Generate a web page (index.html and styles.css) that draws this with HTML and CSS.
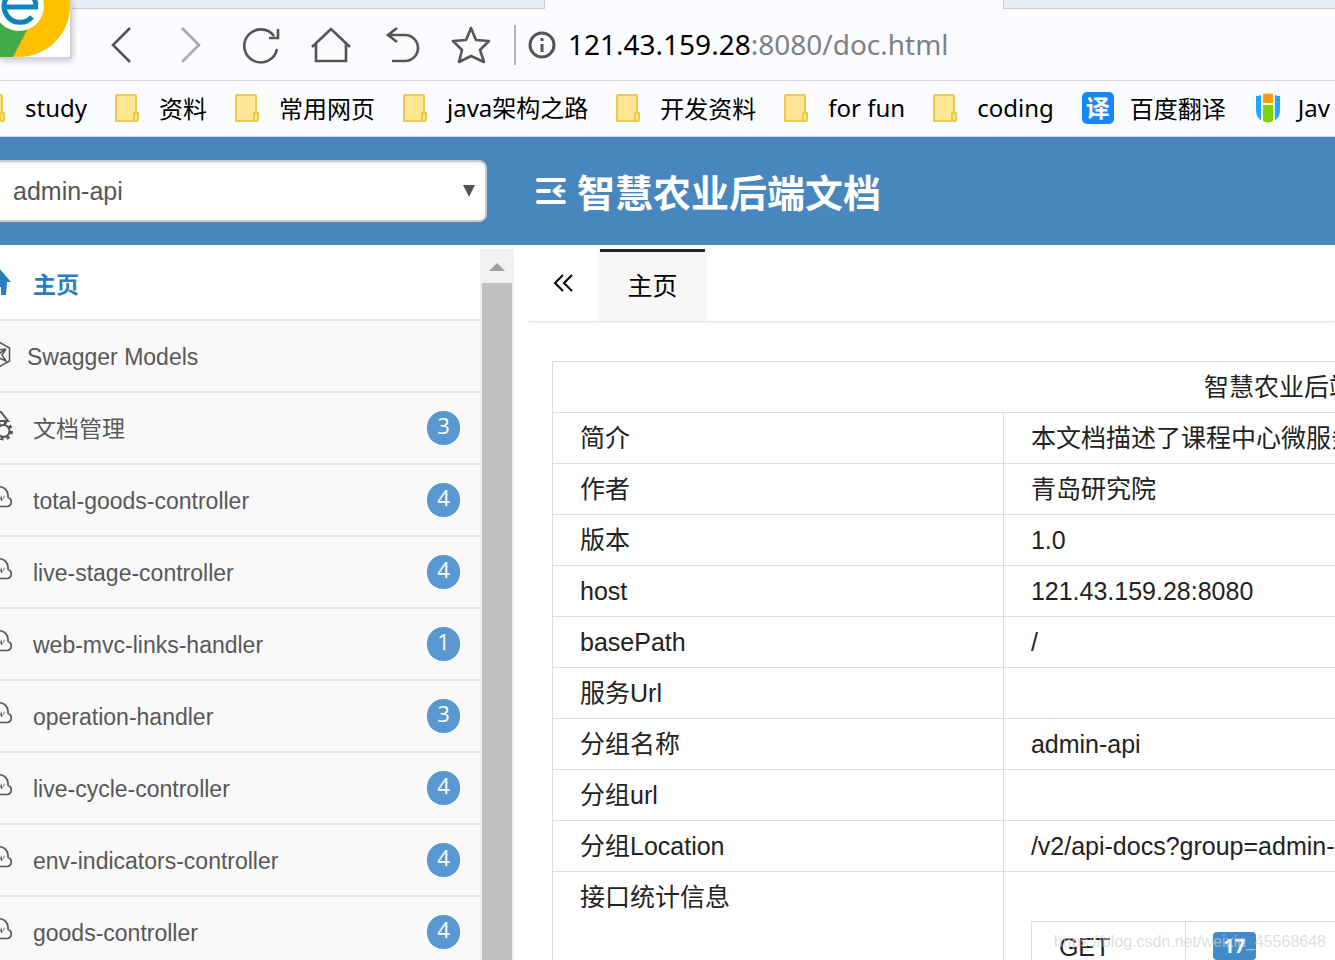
FILE: index.html
```html
<!DOCTYPE html>
<html lang="zh-CN">
<head>
<meta charset="utf-8">
<title>智慧农业后端文档</title>
<link rel="stylesheet" href="styles.css">
</head>
<body>
<svg class="defs" aria-hidden="true">
  <symbol id="folder" viewBox="0 0 24 28"><path d="M1 1h19q1 0 1 1v17h2v7q0 1-1 1H1z" fill="#ffe694"/><path d="M1 1h19q1 0 1 1v17M1 1v26h20M19 19h4v7l-1 1h-3z" fill="none" stroke="#ecc94b" stroke-width="2"/></symbol>
  <symbol id="cloud" viewBox="0 0 28 24"><path d="M7 21.500a6 6 0 0 1-1-11.500 8.500 8.500 0 0 1 17 .5v2a4.600 4.600 0 0 1-1 9z" fill="none" stroke="#555" stroke-width="1.600"/><path d="m10 11-3 3 3 3M14.500 16l2-5M16.500 11v5l3-5" fill="none" stroke="#777" stroke-width="1"/></symbol>
</svg>

<header class="browser">
  <div class="tabstrip"><div class="tab-left"></div><div class="tab-gap"></div><div class="tab-right"></div></div>
  <div class="logo"><svg width="70" height="57" viewBox="0 0 70 57"><circle cx="19" cy="6" r="51" fill="#ffc000"/><path d="M27 30 13 57H0V20z" fill="#43ab47"/><circle cx="19" cy="6" r="25" fill="#fff"/><path d="M4 7h34" stroke="#0e84bd" stroke-width="5"/><path d="M36 5a16 16 0 1 0-4 12" fill="none" stroke="#0e84bd" stroke-width="5"/></svg></div>
  <div class="toolbar">
    <button class="nav" aria-label="后退"><svg width="40" height="40" viewBox="0 0 40 40"><path d="M29 3 12 20l17 17"/></svg></button>
    <button class="nav pale" aria-label="前进"><svg width="40" height="40" viewBox="0 0 40 40"><path d="m11 3 17 17-17 17"/></svg></button>
    <button class="nav" aria-label="刷新"><svg width="40" height="40" viewBox="0 0 40 40"><path d="M36 24a16.500 16.500 0 1 1-3-13M37 4v9h-9"/></svg></button>
    <button class="nav" aria-label="主页"><svg width="40" height="40" viewBox="0 0 40 40"><path d="M1 22 20 4l19 18M5 19v17h30V19"/></svg></button>
    <button class="nav" aria-label="恢复"><svg width="40" height="40" viewBox="0 0 40 40"><path d="m16 3-9 7 9 7M7 10h17a13 13 0 0 1 0 26H11"/></svg></button>
    <button class="nav" aria-label="收藏"><svg width="40" height="40" viewBox="0 0 40 40"><path d="m20 3 5 12 13 1-9 9 4 12-13-6-12 6 3-12-9-9 13-1z" stroke-linejoin="round"/></svg></button>
    <span class="divider"></span>
    <svg class="info" width="28" height="28" viewBox="0 0 28 28"><circle cx="14" cy="14" r="12" fill="none" stroke="#555" stroke-width="3"/><path d="M14 7v3M14 13v8" stroke="#555" stroke-width="3"/></svg>
    <p class="url">121.43.159.28<span>:8080/doc.html</span></p>
  </div>
  <nav class="bookmarks">
    <a href="#"><svg class="folder"><use href="#folder"/></svg><span class="latin">study</span></a>
    <a href="#"><svg class="folder"><use href="#folder"/></svg><span>资料</span></a>
    <a href="#"><svg class="folder"><use href="#folder"/></svg><span>常用网页</span></a>
    <a href="#"><svg class="folder"><use href="#folder"/></svg><span><span class="latin">java</span>架构之路</span></a>
    <a href="#"><svg class="folder"><use href="#folder"/></svg><span>开发资料</span></a>
    <a href="#"><svg class="folder"><use href="#folder"/></svg><span class="latin">for fun</span></a>
    <a href="#"><svg class="folder"><use href="#folder"/></svg><span class="latin">coding</span></a>
    <a class="site" href="#"><b class="yi">译</b><span>百度翻译</span></a>
    <a class="site" href="#"><svg width="28" height="32" viewBox="2 0 28 32"><path d="M4 4q3 0 5-1v25Q4 26 4 17zM28 4q-3 0-5-1v25q5-2 5-11z" fill="#24a8ff"/><path d="M11 2q5-1 10 0v9H11z" fill="#ff9d00"/><path d="M11 13h10v16q-5 3-10 0z" fill="#79d60b"/></svg><span class="latin">Jav</span></a>
  </nav>
</header>

<div class="appbar">
  <div class="group"><select aria-label="分组"><option>admin-api</option></select></div>
  <svg class="fold" width="32" height="30" viewBox="0 0 32 30"><path d="M3 4h26M3 15h11M3 26h26" fill="none" stroke="#fff" stroke-width="4" stroke-linecap="round"/><path d="M22 15h7" stroke="#fff" stroke-width="3" stroke-linecap="round"/><path d="m25 10-6 5 6 5" fill="none" stroke="#fff" stroke-width="3" stroke-linecap="round" stroke-linejoin="round"/></svg>
  <h1>智慧农业后端文档</h1>
</div>

<div class="workspace">
  <aside class="sidebar">
    <ul class="menu">
      <li class="active"><a href="#"><svg class="icon" viewBox="0 0 28 24"><path d="M13-2 0 12l4 1v13h6v-8h6v8h5l1-13h4z" fill="#2b7dbc"/></svg><span>主页</span></a></li>
      <li class="models"><a href="#"><svg class="icon" viewBox="0 0 28 28"><path d="m14 3 10.500 6v13L14 28 4 22V9zM6 20l15-10-7 1M21 10l-4 6 4 6-9-4" fill="none" stroke="#555" stroke-width="1.500"/></svg><span>Swagger Models</span></a></li>
      <li><a href="#"><svg class="icon gear" viewBox="0 0 28 32"><path d="M4 28V3h12l7 9H12" fill="none" stroke="#555" stroke-width="2"/><circle cx="18.500" cy="22" r="6" fill="#f9f9f9" stroke="#555" stroke-width="2"/><circle cx="18.500" cy="22" r="8" fill="none" stroke="#555" stroke-width="3" stroke-dasharray="3 3.283"/></svg><span>文档管理</span><em>3</em></a></li>
      <li><a href="#"><svg class="icon"><use href="#cloud"/></svg><span>total-goods-controller</span><em>4</em></a></li>
      <li><a href="#"><svg class="icon"><use href="#cloud"/></svg><span>live-stage-controller</span><em>4</em></a></li>
      <li><a href="#"><svg class="icon"><use href="#cloud"/></svg><span>web-mvc-links-handler</span><em>1</em></a></li>
      <li><a href="#"><svg class="icon"><use href="#cloud"/></svg><span>operation-handler</span><em>3</em></a></li>
      <li><a href="#"><svg class="icon"><use href="#cloud"/></svg><span>live-cycle-controller</span><em>4</em></a></li>
      <li><a href="#"><svg class="icon"><use href="#cloud"/></svg><span>env-indicators-controller</span><em>4</em></a></li>
      <li><a href="#"><svg class="icon"><use href="#cloud"/></svg><span>goods-controller</span><em>4</em></a></li>
    </ul>
    <div class="scrollbar"><svg width="34" height="34" viewBox="0 0 34 34"><path d="m9 22 8-8 8 8z" fill="#a0a0a0"/></svg><div class="thumb"></div></div>
  </aside>
  <main class="content">
    <div class="tabs">
      <button class="prev" aria-label="向左"><svg width="20" height="20" viewBox="0 0 20 20"><path d="m10 2-8 8 8 8M19 2l-8 8 8 8" fill="none" stroke="#000" stroke-width="2"/></svg></button>
      <button class="tab">主页</button>
    </div>
    <div class="panel">
      <table class="info-table">
        <colgroup><col class="key-col"><col></colgroup>
        <tr><th colspan="2">智慧农业后端文档</th></tr>
        <tr><td>简介</td><td>本文档描述了课程中心微服务</td></tr>
        <tr><td>作者</td><td>青岛研究院</td></tr>
        <tr><td>版本</td><td>1.0</td></tr>
        <tr><td>host</td><td>121.43.159.28:8080</td></tr>
        <tr><td>basePath</td><td>/</td></tr>
        <tr><td>服务Url</td><td></td></tr>
        <tr><td>分组名称</td><td>admin-api</td></tr>
        <tr><td>分组url</td><td></td></tr>
        <tr><td>分组Location</td><td>/v2/api-docs?group=admin-api</td></tr>
        <tr><td>接口统计信息</td><td class="stats"><table><tr><td class="method">GET</td><td><b class="count">17</b></td></tr></table></td></tr>
      </table>
    </div>
  </main>
</div>
<p class="watermark">https://blog.csdn.net/weixin_45568648</p>
</body>
</html>
```

FILE: styles.css
```css
* { box-sizing: border-box; }
body {
  margin: 0;
  height: 100vh;
  display: flex;
  flex-direction: column;
  overflow: hidden;
  position: relative;
  background: #fff;
  color: #222;
  font-family: "Liberation Sans", "Noto Sans CJK SC", sans-serif;
}
.defs { display: none; }
button { padding: 0; border: 0; background: none; font: inherit; }
a { color: inherit; text-decoration: none; }
svg { flex: none; }

.browser { flex: none; position: relative; background: #fbfcff; color: #000; }
.tabstrip { display: flex; height: 9px; }
.tab-left, .tab-right { background: #ebedf6; border-bottom: 1px solid #c8cad0; }
.tab-left { width: 545px; border-right: 1px solid #c8cad0; }
.tab-gap { width: 458px; }
.tab-right { flex: 1; border-left: 1px solid #c8cad0; }
.logo {
  position: absolute;
  left: 0;
  top: 0;
  border: solid #d4d4d6;
  border-width: 0 2px 2px 0;
  box-shadow: 1px 2px 6px #0003;
  background: #fff;
}
.logo svg { display: block; }
.toolbar {
  display: flex;
  align-items: center;
  height: 72px;
  padding-left: 101px;
  border-bottom: 1px solid #d8d9dc;
}
.nav { width: 40px; height: 40px; margin-right: 30px; }
.nav svg { display: block; fill: none; stroke: #555; stroke-width: 2.6; }
.nav.pale svg { stroke: #aaa; }
.divider { width: 2px; height: 40px; margin-left: -7px; background: #b4b4b4; }
.info { margin-left: 12px; }
.url {
  margin: 0 0 0 12px;
  padding-bottom: 2px;
  font-family: "Noto Sans", sans-serif;
  font-size: 28px;
  line-height: 40px;
  white-space: nowrap;
}
.url span { color: #808080; }
.bookmarks {
  display: flex;
  align-items: center;
  gap: 28px;
  height: 56px;
  margin-left: -19px;
  padding-bottom: 2px;
  border-bottom: 1px solid #d8d9dc;
  font: 24px/32px "Noto Sans CJK SC", sans-serif;
  white-space: nowrap;
}
.bookmarks a { display: flex; align-items: center; gap: 20px; }
.bookmarks a.site { gap: 16px; }
.bookmarks .latin { font-family: "Noto Sans", sans-serif; }
.folder { width: 24px; height: 28px; }
.yi {
  width: 32px;
  height: 32px;
  border-radius: 5px;
  background: #1788fb;
  color: #fff;
  font-size: 24px;
  line-height: 30px;
  text-align: center;
}

.appbar {
  flex: none;
  display: flex;
  align-items: center;
  height: 108px;
  background: #4887be;
  color: #fff;
}
.group { position: relative; width: 495px; margin-left: -8px; }
.group::after {
  content: "";
  position: absolute;
  right: 12px;
  top: 25px;
  border: solid transparent;
  border-width: 12px 6px 0;
  border-top-color: #555;
}
select {
  display: block;
  width: 100%;
  height: 62px;
  padding: 0 19px;
  appearance: none;
  border: 2px solid #ccc;
  border-radius: 8px;
  background: #fff;
  box-shadow: inset 0 2px 3px #0001;
  color: #555;
  font: 25px "Liberation Sans", sans-serif;
}
.fold { margin-left: 48px; }
h1 { margin: 0 0 0 10px; padding-top: 6px; font-size: 38px; line-height: 56px; white-space: nowrap; }

.workspace { flex: 1; display: flex; gap: 14px; min-height: 0; padding-top: 4px; }
.sidebar { flex: none; display: flex; width: 514px; overflow: hidden; }
.menu { flex: 1; margin: 0; padding: 0; list-style: none; }
.menu li { height: 72px; border-bottom: 2px solid #e5e5e5; background: #f9f9f9; }
.menu a {
  display: flex;
  align-items: center;
  height: 100%;
  padding-right: 20px;
  color: #585858;
  font-size: 23px;
  line-height: 34px;
  white-space: nowrap;
}
.menu span { padding-top: 2px; }
.icon { width: 28px; height: 24px; margin: 0 20px 6px -15px; overflow: visible; }
.icon.gear { height: 32px; }
.models .icon { height: 28px; margin-right: 14px; }
.menu .active { background: #fff; }
.menu .active a { color: #2b7dbc; font-weight: bold; }
.menu em {
  width: 33px;
  height: 34px;
  margin-left: auto;
  border-radius: 16px;
  background: #5897cf;
  color: #fff;
  font: 22px/28px "Open Sans", sans-serif;
  text-align: center;
}
.scrollbar { display: flex; flex-direction: column; width: 34px; background: #f1f1f1; }
.thumb { flex: 1; margin: 0 2px; background: #c1c1c1; }

.content { flex: 1; min-width: 0; overflow: hidden; }
.tabs {
  display: flex;
  height: 73px;
  border-bottom: 1px solid #e4e4e4;
  box-shadow: 0 1px 2px #0001;
}
.prev { display: flex; align-items: center; justify-content: center; width: 70px; height: 68px; }
.tab {
  width: 109px;
  height: 72px;
  padding-bottom: 3px;
  border: solid #f6f6f6;
  border-width: 0 2px;
  background: linear-gradient(#23262e 3px, #f6f6f6 3px);
  color: #000;
  font-size: 25px;
}
.panel { padding: 39px 24px; }
table { border-collapse: collapse; font-size: 25px; line-height: 30px; }
.info-table { width: 1504px; table-layout: fixed; }
.key-col { width: 30%; }
th, td {
  height: 51px;
  padding: 10px 27px;
  border: 1px solid #ddd;
  font-weight: normal;
  text-align: left;
  vertical-align: top;
}
th { text-align: center; }
.info-table .stats { padding-top: 49px; }
.stats table { width: 100%; }
.stats .method { width: 154px; }
.count {
  display: block;
  width: 43px;
  border-radius: 4px;
  background: #428bca;
  color: #fff;
  font: bold 19px/28px "Open Sans", sans-serif;
  text-align: center;
}
.watermark {
  position: absolute;
  right: 9px;
  bottom: 9px;
  margin: 0;
  color: #d0d0d0b0;
  font-size: 16px;
  line-height: 18px;
}
```
